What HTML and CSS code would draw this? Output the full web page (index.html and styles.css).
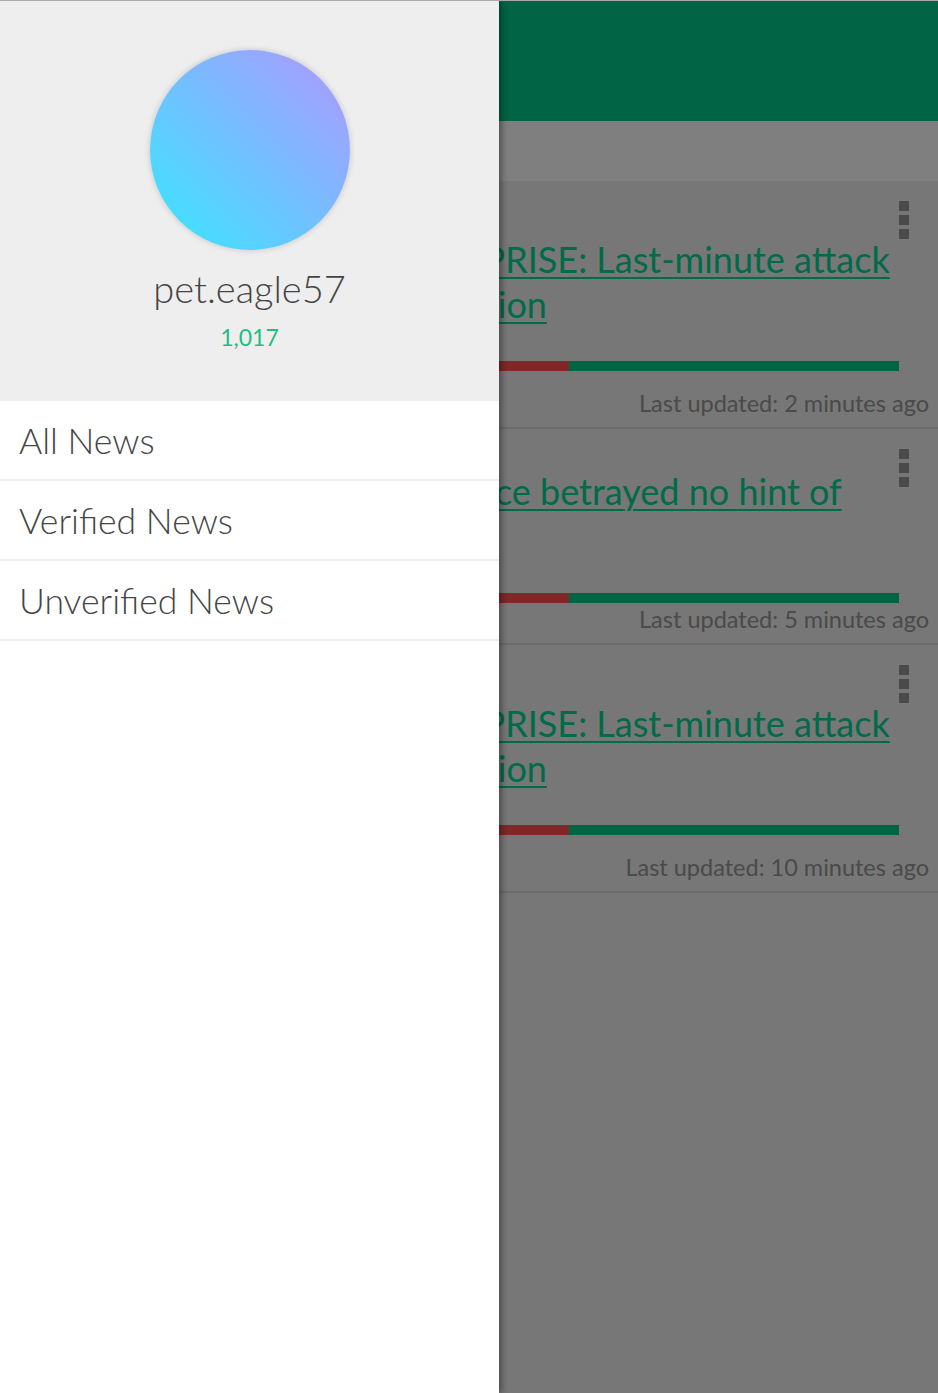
FILE: index.html
```html
<!DOCTYPE html>
<html lang="en">
<head>
<meta charset="utf-8">
<title>News</title>
<link rel="stylesheet" href="styles.css">
</head>
<body>
<div class="app">
  <main class="page">
    <header class="appbar"></header>
    <div class="tabs"></div>
    <section class="feed">
      <article class="card">
        <button class="kebab" aria-label="More"><span></span><span></span><span></span></button>
        <a href="#" class="card-title">BIG ELECTION NIGHT SURPRISE: Last-minute attack seals the title at the late session</a>
        <div class="meter"><div class="meter-false" style="width:61.4%"></div></div>
        <p class="updated">Last updated: 2 minutes ago</p>
      </article>
      <article class="card card--compact">
        <button class="kebab" aria-label="More"><span></span><span></span><span></span></button>
        <a href="#" class="card-title">The Senator's cool, steady face betrayed no hint of emotion</a>
        <div class="meter"><div class="meter-false" style="width:61.4%"></div></div>
        <p class="updated">Last updated: 5 minutes ago</p>
      </article>
      <article class="card">
        <button class="kebab" aria-label="More"><span></span><span></span><span></span></button>
        <a href="#" class="card-title">BIG ELECTION NIGHT SURPRISE: Last-minute attack seals the title at the late session</a>
        <div class="meter"><div class="meter-false" style="width:61.4%"></div></div>
        <p class="updated">Last updated: 10 minutes ago</p>
      </article>
    </section>
  </main>
  <div class="scrim"></div>
  <nav class="drawer">
    <div class="profile">
      <div class="avatar"></div>
      <div class="username">pet.eagle57</div>
      <div class="points">1,017</div>
    </div>
    <ul class="menu">
      <li><a href="#">All News</a></li>
      <li><a href="#">Verified News</a></li>
      <li><a href="#">Unverified News</a></li>
    </ul>
  </nav>
</div>
</body>
</html>
```
FILE: styles.css
```css
* { box-sizing: border-box; }

html, body {
  margin: 0;
  padding: 0;
}

body {
  font-family: Lato, "Open Sans", sans-serif;
  border-top: 1px solid #aaaaaa;
  background: #eeeeee;
}

.app {
  position: relative;
  min-height: 1392px;
  overflow: hidden;
}

/* ---------- page behind the drawer ---------- */
.page {
  display: flex;
  flex-direction: column;
  min-height: 1392px;
  background: #eeeeee;
}

.appbar {
  height: 120px;
  background: #00c88a;
}

.tabs {
  height: 60px;
  background: #ffffff;
}

.feed {
  display: flex;
  flex-direction: column;
}

.card {
  position: relative;
  display: flex;
  flex-direction: column;
  padding: 56px 9px 10px 45px;
  background: #eeeeee;
  border-bottom: 2px solid #d8d8d8;
}

.card--compact {
  padding-top: 40px;
}

.kebab {
  position: absolute;
  top: 20px;
  right: 29px;
  display: flex;
  flex-direction: column;
  gap: 4px;
  padding: 0;
  border: 0;
  background: none;
}

.kebab span {
  display: block;
  width: 10px;
  height: 10px;
  background: #949494;
}

.card-title {
  font-size: 36px;
  line-height: 45px;
  color: #00d690;
  text-decoration: underline;
  text-decoration-thickness: 2px;
  text-underline-offset: 4px;
}

.meter {
  display: flex;
  height: 10px;
  margin: 34px 30px 0 0;
  background: #00c88a;
}

.meter-false {
  height: 100%;
  background: #ff5050;
}

.updated {
  margin: 18px 0 0;
  font-size: 23.5px;
  line-height: 28px;
  text-align: right;
  color: #949494;
}

.card--compact .updated {
  margin-top: 2px;
}

/* ---------- scrim ---------- */
.scrim {
  position: absolute;
  inset: 0;
  background: rgba(0, 0, 0, 0.5);
}

/* ---------- drawer ---------- */
.drawer {
  position: absolute;
  top: 0;
  left: 0;
  bottom: 0;
  width: 499px;
  background: #ffffff;
  box-shadow: 2px 0 7px rgba(0, 0, 0, 0.45);
}

.profile {
  display: flex;
  flex-direction: column;
  align-items: center;
  height: 400px;
  padding-top: 49px;
  background: #eeeeee;
}

.avatar {
  width: 200px;
  height: 200px;
  border-radius: 50%;
  background: linear-gradient(45deg, #36e8ff 0%, #b196ff 100%);
  box-shadow: 0 0 6px rgba(0, 0, 0, 0.18);
}

.username {
  margin-top: 15px;
  font-size: 38px;
  font-weight: 300;
  line-height: 46px;
  color: #444444;
}

.points {
  margin-top: 12px;
  font-size: 23px;
  line-height: 28px;
  color: #1dbf85;
}

.menu {
  margin: 0;
  padding: 0;
  list-style: none;
}

.menu li {
  border-bottom: 2px solid #eeeeee;
}

.menu a {
  display: block;
  height: 78px;
  padding: 2px 20px 0 19px;
  font-size: 35.6px;
  font-weight: 300;
  line-height: 76px;
  color: #454545;
  text-decoration: none;
}
```
